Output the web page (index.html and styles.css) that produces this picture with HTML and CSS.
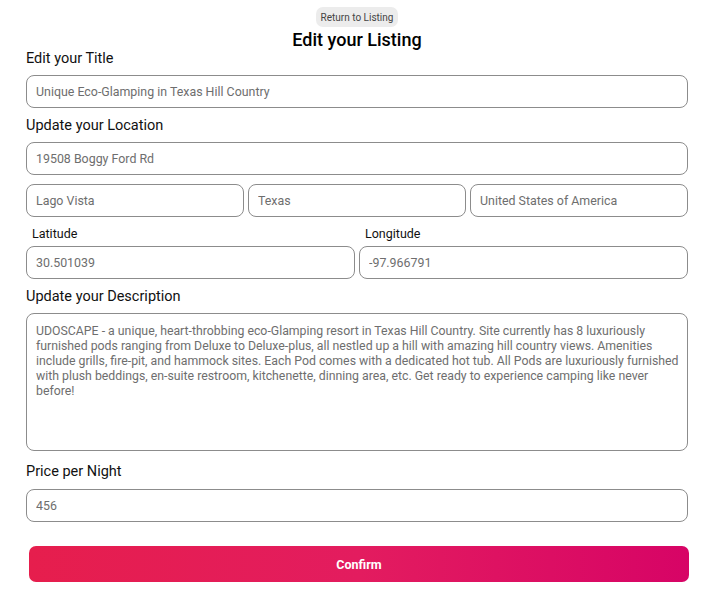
FILE: index.html
```html
<!DOCTYPE html>
<html>
<head>
<meta charset="utf-8">
<link rel="stylesheet" href="styles.css">
</head>
<body>
<div class="page">
  <div class="top">
    <button class="pill">Return to Listing</button>
    <h1 class="heading">Edit your Listing</h1>
  </div>
  <form class="form">
    <label class="label l-title">Edit your Title</label>
    <input class="field" type="text" value="Unique Eco-Glamping in Texas Hill Country">

    <label class="label l-next">Update your Location</label>
    <input class="field" type="text" value="19508 Boggy Ford Rd">
    <div class="row three">
      <input class="field" type="text" value="Lago Vista">
      <input class="field" type="text" value="Texas">
      <input class="field" type="text" value="United States of America">
    </div>
    <div class="row two">
      <div class="col">
        <label class="sublabel">Latitude</label>
        <input class="field" type="text" value="30.501039">
      </div>
      <div class="col">
        <label class="sublabel">Longitude</label>
        <input class="field" type="text" value="-97.966791">
      </div>
    </div>

    <label class="label l-next">Update your Description</label>
    <textarea class="field area">UDOSCAPE - a unique, heart-throbbing eco-Glamping resort in Texas Hill Country. Site currently has 8 luxuriously furnished pods ranging from Deluxe to Deluxe-plus, all nestled up a hill with amazing hill country views. Amenities include grills, fire-pit, and hammock sites. Each Pod comes with a dedicated hot tub. All Pods are luxuriously furnished with plush beddings, en-suite restroom, kitchenette, dinning area, etc. Get ready to experience camping like never before!</textarea>

    <label class="label l-price">Price per Night</label>
    <input class="field" type="text" value="456">

    <button class="confirm" type="button">Confirm</button>
  </form>
</div>
</body>
</html>
```
FILE: styles.css
```css
* { box-sizing: border-box; }
html, body { margin: 0; padding: 0; background: #fff; }
body { font-family: Roboto, "Noto Sans", "Liberation Sans", sans-serif; color: #111; }
.page { padding: 7px 28px 0 26px; }
.top { display: flex; flex-direction: column; align-items: center; }
.pill {
  height: 20px; padding: 0 5px; border: none; border-radius: 7px;
  background: #ececec; color: #444; font-family: inherit; font-size: 10px;
}
.heading { margin: 2px 0 0; font-size: 18px; line-height: 22px; font-weight: 500; color: #000; }
.form { display: flex; flex-direction: column; }
.label { display: block; font-size: 14.5px; line-height: 18px; color: #111; margin-bottom: 7px; }
.l-title { margin-top: -1px; }
.l-next { margin-top: 9px; }
.l-price { margin-top: 12px; margin-bottom: 8px; }
.field {
  display: block; width: 100%; height: 33px; padding: 0 9px;
  border: 1px solid #8c8c8c; border-radius: 8px; background: #fff;
  font-family: inherit; font-size: 12.4px; font-weight: 400; color: #6e6e6e; outline: none;
}
.row { display: grid; gap: 4px; margin-top: 9px; }
.three { grid-template-columns: 1fr 1fr 1fr; }
.two { grid-template-columns: 1fr 1fr; }
.col { display: flex; flex-direction: column; }
.sublabel { font-size: 12.5px; line-height: 16px; padding-left: 6px; margin-bottom: 4px; color: #111; }
.area {
  height: 138px; padding: 10px 1px 9px 9px; resize: none; line-height: 15px; font-size: 12.3px;
}
.confirm {
  margin: 24px 0 0 3px; width: 660px; height: 36px; border: none; border-radius: 7px;
  background: linear-gradient(90deg, #e61e4d 0%, #e31c5f 50%, #d70466 100%);
  color: #fff; font-family: inherit; font-size: 12.5px; font-weight: 700;
}
```
